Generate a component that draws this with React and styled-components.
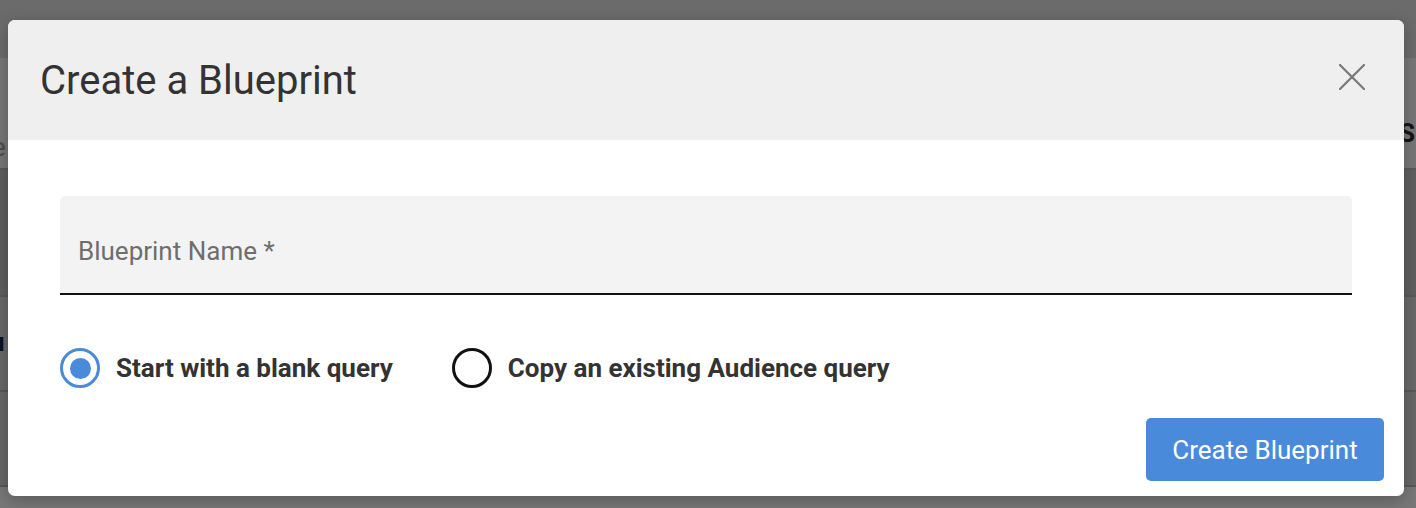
import React from "react";
import styled, { createGlobalStyle } from "styled-components";

const Global = createGlobalStyle`
  html, body { margin: 0; padding: 0; width: 1416px; height: 508px; overflow: hidden; }
  body { font-family: Roboto, "Liberation Sans", Arial, sans-serif; }
  * { box-sizing: border-box; }
`;

const Page = styled.div`
  width: 1416px;
  height: 508px;
  position: relative;
  background: #eeeeee;
  display: flex;
  flex-direction: column;
`;

const PageBar = styled.div`
  height: 58px;
  background: #d6d6d6;
`;

const PageRow = styled.div`
  height: ${(p) => p.$h}px;
  background: ${(p) => p.$bg};
  border-bottom: 2px solid #b0b0b0;
  display: flex;
  align-items: flex-start;
  justify-content: space-between;
  font-weight: 700;
  font-size: 26px;
  color: #2a2a2a;
`;

const PageText = styled.span`
  margin-top: ${(p) => p.$top}px;
  font-weight: ${(p) => (p.$light ? 400 : 700)};
  color: ${(p) => p.$color || "#2a2a2a"};
`;

const Overlay = styled.div`
  position: absolute;
  inset: 0;
  background: rgba(0, 0, 0, 0.5);
`;

const Modal = styled.div`
  position: absolute;
  left: 8px;
  top: 20px;
  width: 1396px;
  height: 476px;
  background: #ffffff;
  border-radius: 7px;
  overflow: hidden;
  display: flex;
  flex-direction: column;
  box-shadow: 0 4px 16px rgba(0, 0, 0, 0.25);
`;

const Header = styled.div`
  height: 120px;
  flex: none;
  background: #efefef;
  display: flex;
  align-items: center;
  justify-content: space-between;
  padding: 0 36px 0 32px;
`;

const Title = styled.h2`
  margin: 0;
  font-weight: 400;
  font-size: 40px;
  color: #333333;
`;

const CloseButton = styled.button`
  width: 32px;
  height: 32px;
  border: none;
  background: transparent;
  padding: 0;
  display: flex;
  align-items: center;
  justify-content: center;
  margin-top: -6px;
  cursor: pointer;
`;

const Body = styled.div`
  padding: 56px 52px 0 52px;
  display: flex;
  flex-direction: column;
`;

const Field = styled.div`
  height: 99px;
  background: #f3f3f3;
  border-radius: 5px 5px 0 0;
  border-bottom: 2px solid #111111;
  display: flex;
  align-items: center;
  padding-left: 18px;
  padding-top: 12px;
`;

const FieldLabel = styled.span`
  font-size: 26px;
  color: #6e6e6e;
`;

const RadioGroup = styled.div`
  margin-top: 53px;
  height: 40px;
  display: flex;
  align-items: center;
`;

const RadioItem = styled.label`
  display: flex;
  align-items: center;
  gap: 16px;
  margin-right: ${(p) => p.$mr || 0}px;
`;

const RadioCircle = styled.span`
  width: 40px;
  height: 40px;
  border-radius: 50%;
  border: 3.5px solid ${(p) => (p.$checked ? "#4a8adb" : "#111111")};
  display: flex;
  align-items: center;
  justify-content: center;
  &::after {
    content: "";
    display: ${(p) => (p.$checked ? "block" : "none")};
    width: 21px;
    height: 21px;
    border-radius: 50%;
    background: #4a8adb;
  }
`;

const RadioLabel = styled.span`
  font-size: 26px;
  font-weight: 700;
  color: #333333;
`;

const Footer = styled.div`
  margin-top: 30px;
  display: flex;
  justify-content: flex-end;
  padding-right: 20px;
`;

const PrimaryButton = styled.button`
  width: 238px;
  height: 63px;
  border: none;
  border-radius: 5px;
  background: #4a8adb;
  color: #ffffff;
  font-family: inherit;
  font-size: 26px;
  font-weight: 400;
  cursor: pointer;
`;

export default function App() {
  return (
    <>
      <Global />
      <Page>
        <PageBar />
        <PageRow $h={112} $bg="#ececec">
          <PageText $top={74} $light $color="#999999" style={{ marginLeft: -8 }}>e</PageText>
          <PageText $top={60} style={{ marginRight: -6 }}>Sl</PageText>
        </PageRow>
        <PageRow $h={127} $bg="#bcbcbc" />
        <PageRow $h={95} $bg="#d0d0d0">
          <PageText $top={30} $color="#1a2440" style={{ marginLeft: -10 }}>u</PageText>
        </PageRow>
        <PageRow $h={95} $bg="#cfcfcf" />
        <Overlay />
        <Modal>
          <Header>
            <Title>Create a Blueprint</Title>
            <CloseButton aria-label="Close">
              <svg width="26" height="26" viewBox="0 0 26 26">
                <path d="M1 1 L25 25 M25 1 L1 25" stroke="#777777" strokeWidth="2.2" strokeLinecap="round" fill="none" />
              </svg>
            </CloseButton>
          </Header>
          <Body>
            <Field>
              <FieldLabel>Blueprint Name *</FieldLabel>
            </Field>
            <RadioGroup>
              <RadioItem $mr={59}>
                <RadioCircle $checked />
                <RadioLabel>Start with a blank query</RadioLabel>
              </RadioItem>
              <RadioItem>
                <RadioCircle />
                <RadioLabel>Copy an existing Audience query</RadioLabel>
              </RadioItem>
            </RadioGroup>
          </Body>
          <Footer>
            <PrimaryButton>Create Blueprint</PrimaryButton>
          </Footer>
        </Modal>
      </Page>
    </>
  );
}
